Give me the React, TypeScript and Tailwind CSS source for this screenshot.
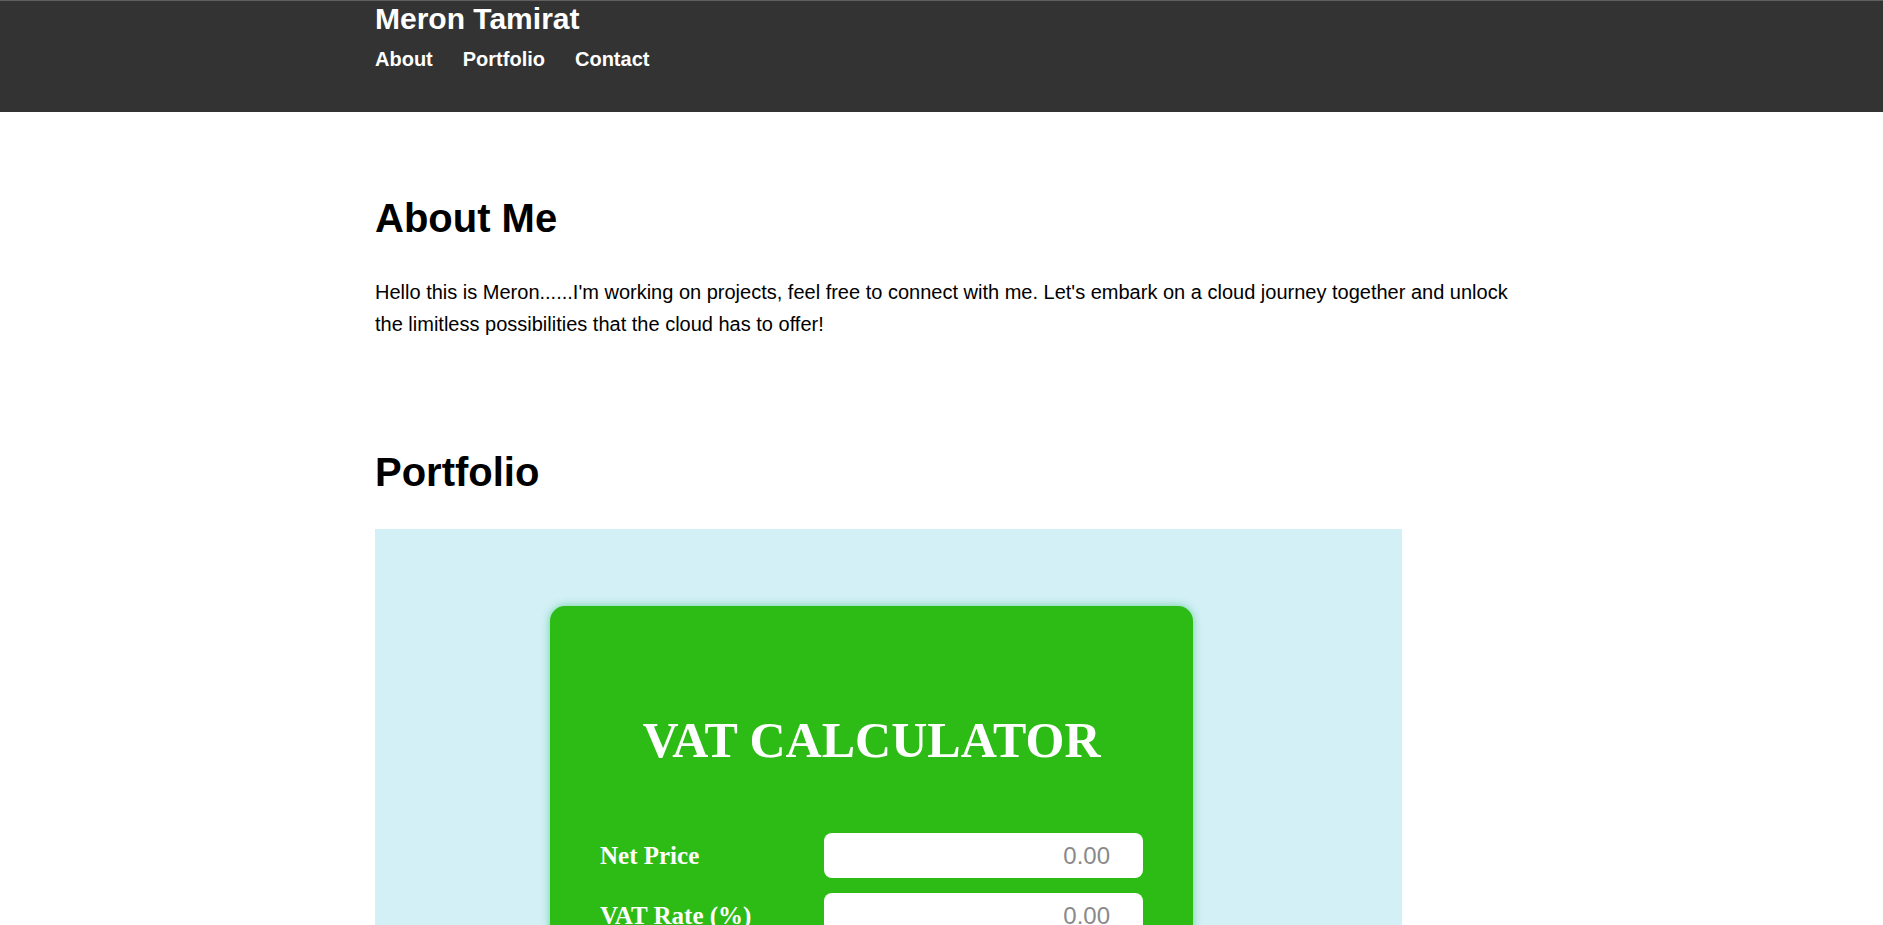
import React from 'react';

const sans = { fontFamily: '"Liberation Sans", Arial, sans-serif' };

const Row = ({ label }: { label: string }) => (
  <div className="flex items-center justify-between h-[45px] mb-[15px]">
    <label className="text-[25px] font-bold text-white">{label}</label>
    <input
      type="text"
      placeholder="0.00"
      className="w-[319px] h-[45px] rounded-[8px] bg-white text-right pr-[33px] text-[24px] text-[#333] placeholder:text-[#8a8a8a] outline-none"
      style={sans}
    />
  </div>
);

const App = () => {
  return (
    <div className="min-h-screen bg-white text-black" style={sans}>
      <header className="h-[112px] bg-[#333333] border-t border-[#5f5f5f]">
        <div className="ml-[375px] w-[1133px]">
          <h1 className="text-[30px] font-bold text-white leading-[34px] mt-px">Meron Tamirat</h1>
          <nav className="flex gap-[30px] mt-[12px] text-[20px] font-bold text-white leading-[23px]">
            <a href="#about">About</a>
            <a href="#portfolio">Portfolio</a>
            <a href="#contact">Contact</a>
          </nav>
        </div>
      </header>

      <main className="ml-[375px] w-[1133px]">
        <section id="about" className="pt-[83px]">
          <h2 className="text-[40px] font-bold leading-[46px]">About Me</h2>
          <p className="mt-[35px] text-[20px] leading-[32px]">
            Hello this is Meron......I'm working on projects, feel free to connect with me. Let's embark on a cloud journey together and unlock the limitless possibilities that the cloud has to offer!
          </p>
        </section>

        <section id="portfolio" className="pt-[109px]">
          <h2 className="text-[40px] font-bold leading-[46px]">Portfolio</h2>
          <div className="mt-[34px] w-[1027px] bg-[#d3f0f7] pt-[77px] pb-[80px]">
            <div
              className="ml-[175px] w-[643px] rounded-[15px] bg-[#2dbb16] pt-[107px] pb-[50px] pl-[50px] pr-[50px] shadow-[0_0_8px_rgba(60,200,120,0.7)]"
              style={{ fontFamily: '"Liberation Serif", "Times New Roman", serif' }}
            >
              <h1 className="text-center text-[50px] font-bold text-white leading-[55px] mb-[65px]">VAT CALCULATOR</h1>
              <Row label="Net Price" />
              <Row label="VAT Rate (%)" />
              <Row label="VAT Amount" />
              <Row label="Gross Price" />
            </div>
          </div>
        </section>
      </main>
    </div>
  );
};

export default App;
